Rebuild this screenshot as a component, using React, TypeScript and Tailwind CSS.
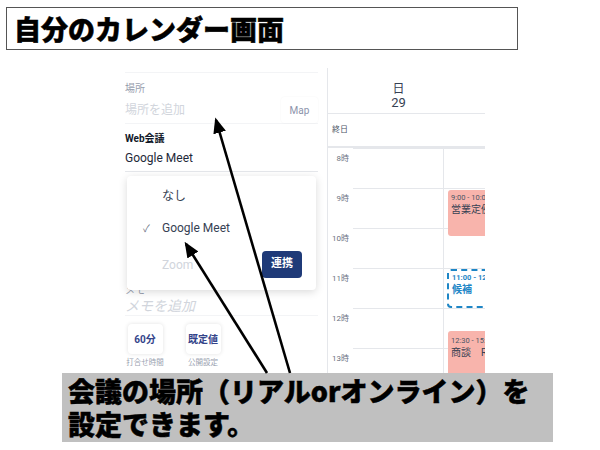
import React from 'react';

const FONT = { fontFamily: 'Roboto, "Noto Sans CJK JP", sans-serif' };
const HEAVY = { fontFamily: '"Noto Sans CJK JP", sans-serif' };

const HOURS = ['8時', '9時', '10時', '11時', '12時', '13時', '14時'];

function Arrow({ x1, y1, x2, y2 }: { x1: number; y1: number; x2: number; y2: number }) {
  return <line x1={x1} y1={y1} x2={x2} y2={y2} stroke="#000" strokeWidth={2.6} markerEnd="url(#head)" />;
}

function SettingsPanel() {
  return (
    <div className="relative w-[217px] shrink-0 pl-[15px] pr-[9px]">
      <div className="mt-[17px] border-t border-gray-100" />
      <div className="mt-[10px] text-[10px] leading-[12px] text-gray-400">場所</div>
      <div className="mt-[2px] flex h-[27px] items-center justify-between border-b border-gray-100">
        <span className="text-[12px] text-gray-300">場所を追加</span>
        <span className="flex h-[26px] w-[37px] items-center justify-center rounded text-[10px] text-[#8c93ab] shadow-[0_0_2px_rgba(0,0,0,0.05)]">
          Map
        </span>
      </div>
      <div className="mt-[9px] text-[10px] font-bold leading-[12px] text-gray-900">Web会議</div>
      <div className="mt-[5px] border-b border-gray-200 pb-[5px] text-[12px] leading-[16px] text-gray-800">Google Meet</div>
      <div className="mt-[113px] text-[10px] leading-[12px] text-gray-400">メモ</div>
      <div className="border-b border-gray-100 text-[14px] italic leading-[18px] text-gray-300">メモを追加</div>
      <div className="mt-[8px] flex gap-[18px]">
        {[
          ['60分', '打合せ時間'],
          ['既定値', '公開設定'],
        ].map(([v, l]) => (
          <div key={l} className="flex w-[40px] flex-col items-center">
            <div className="flex h-[30px] w-[35px] items-center justify-center rounded bg-white text-[10px] font-bold text-[#34448a] shadow-[0_0_4px_rgba(0,0,0,0.12)]">
              {v}
            </div>
            <div className="mt-[3px] whitespace-nowrap text-[7.5px] text-gray-400">{l}</div>
          </div>
        ))}
      </div>

      {/* dropdown menu */}
      <div className="absolute left-[17px] top-[121px] h-[114px] w-[189px] rounded bg-white pt-[10px] shadow-[0_2px_8px_rgba(0,0,0,0.15)]">
        <div className="flex h-[20px] items-center pl-[35px] text-[12px] text-gray-700">なし</div>
        <div className="mt-[12px] flex h-[20px] items-center text-[12px] text-gray-700">
          <span className="w-[35px] pl-[16px] text-[10px] text-gray-500">✓</span>
          Google Meet
        </div>
        <div className="mt-[13px] flex h-[27px] items-center justify-between pl-[35px] pr-[14px]">
          <span className="text-[12px] text-gray-300">Zoom</span>
          <span className="flex h-[27px] w-[40px] items-center justify-center rounded bg-[#1f3a78] text-[11px] font-bold text-white">
            連携
          </span>
        </div>
      </div>
    </div>
  );
}

function CalendarPanel() {
  return (
    <div className="mt-[13px] w-[158px] shrink-0 border-l border-gray-200">
      <div className="h-[46px] border-b border-gray-200 pl-[25px] pt-[14px]">
        <div className="w-[91px] text-center text-[12px] leading-[14px] text-gray-700">日</div>
        <div className="w-[91px] text-center text-[13px] leading-[14px] text-gray-700">29</div>
      </div>
      <div className="flex h-[34px] items-center border-b-2 border-gray-200 pl-[4px] text-[8px] text-gray-600">終日</div>
      <div className="relative">
        {HOURS.map(h => (
          <div key={h} className="flex h-[40px]">
            <div className="w-[25px] shrink-0 pr-[4px] pt-[5px] text-right text-[8px] text-gray-500">{h}</div>
            <div className="w-[91px] shrink-0 border-r border-t border-gray-200" />
            <div className="flex-1 border-t border-gray-200" />
          </div>
        ))}
        <div className="absolute left-[120px] top-[42px] h-[46px] w-[60px] rounded-[3px] bg-[#f8b4ac] pl-[3px] pt-[3px]">
          <div className="whitespace-nowrap text-[7.5px] leading-[10px] text-gray-600">9:00 - 10:00</div>
          <div className="whitespace-nowrap text-[10px] leading-[14px] text-gray-700">営業定例</div>
        </div>
        <div className="absolute left-[119px] top-[121px] h-[39px] w-[60px] rounded-[4px] border-2 border-dashed border-[#1e86c6] pl-[3px] pt-[2px]">
          <div className="whitespace-nowrap text-[7.5px] font-bold leading-[10px] text-[#1e86c6]">11:00 - 12:00</div>
          <div className="whitespace-nowrap text-[10px] font-bold leading-[14px] text-[#1e86c6]">候補</div>
        </div>
        <div className="absolute left-[120px] top-[183px] h-[60px] w-[60px] rounded-[3px] bg-[#f8b4ac] pl-[3px] pt-[5px]">
          <div className="whitespace-nowrap text-[7.5px] leading-[10px] text-gray-600">12:30 - 15:00</div>
          <div className="whitespace-nowrap text-[10px] leading-[14px] text-gray-700">商談　R社</div>
        </div>
      </div>
    </div>
  );
}

export default function App() {
  return (
    <div className="relative h-[450px] w-[600px] overflow-hidden bg-white" style={FONT}>
      <div className="ml-[6px] mt-[7px] flex h-[43px] w-[512px] items-center border border-[#555] pl-[7px]">
        <span className="text-[27px] font-black leading-none text-black [-webkit-text-stroke:0.5px_black]" style={HEAVY}>
          自分のカレンダー画面
        </span>
      </div>

      <div className="ml-[110px] mt-[5px] flex h-[340px] w-[375px] overflow-hidden">
        <SettingsPanel />
        <CalendarPanel />
      </div>

      <div
        className="absolute left-[62px] top-[373px] h-[69px] w-[491px] bg-[#c0c0c0] pl-[6px] pt-[1px] text-[27px] font-black leading-[33px] text-black [-webkit-text-stroke:0.5px_black]"
        style={HEAVY}
      >
        会議の場所（リアルorオンライン）を
        <br />
        設定できます。
      </div>

      <svg className="absolute left-0 top-0" width="600" height="450">
        <defs>
          <marker id="head" markerWidth="6" markerHeight="5" refX="5" refY="2.5" orient="auto" markerUnits="strokeWidth">
            <path d="M0,0 L6,2.5 L0,5 Z" fill="#000" />
          </marker>
        </defs>
        <Arrow x1={290} y1={373} x2={216} y2={120} />
        <Arrow x1={267} y1={373} x2={186} y2={244} />
      </svg>
    </div>
  );
}
